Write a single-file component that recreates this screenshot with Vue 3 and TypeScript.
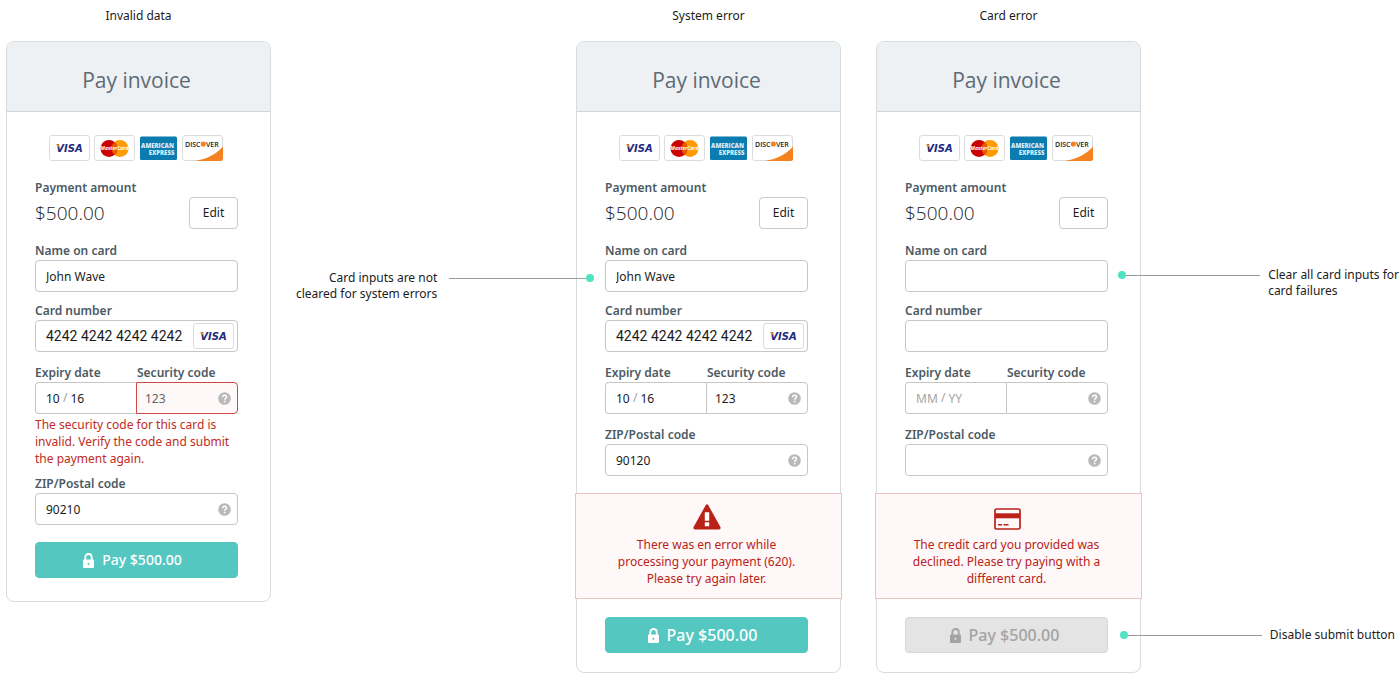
<script setup lang="ts">
interface Panel {
  id: string
  title: string
  name: string
  number: string
  month: string
  year: string
  code: string
  zip: string
  codeError?: string
  alert?: { icon: 'warning' | 'card'; text: string }
  disabled?: boolean
}

const panels: Panel[] = [
  {
    id: 'invalid',
    title: 'Invalid data',
    name: 'John Wave',
    number: '4242 4242 4242 4242',
    month: '10',
    year: '16',
    code: '123',
    zip: '90210',
    codeError: 'The security code for this card is invalid. Verify the code and submit the payment again.',
  },
  {
    id: 'system',
    title: 'System error',
    name: 'John Wave',
    number: '4242 4242 4242 4242',
    month: '10',
    year: '16',
    code: '123',
    zip: '90120',
    alert: {
      icon: 'warning',
      text: 'There was en error while processing your payment (620). Please try again later.',
    },
  },
  {
    id: 'declined',
    title: 'Card error',
    name: '',
    number: '',
    month: '',
    year: '',
    code: '',
    zip: '',
    alert: {
      icon: 'card',
      text: 'The credit card you provided was declined. Please try paying with a different card.',
    },
    disabled: true,
  },
]
</script>

<template>
  <main class="board">
    <section v-for="p in panels" :key="p.id" class="panel" :class="p.id">
      <h2 class="panel-title">{{ p.title }}</h2>
      <form class="card" @submit.prevent>
        <header class="card-head">
          <h1>Pay invoice</h1>
        </header>
        <div class="card-body">
          <div class="brands">
            <svg class="brand" viewBox="0 0 41 26" role="img" aria-label="Visa">
              <rect x="0.5" y="0.5" width="40" height="25" rx="2.5" fill="#fff" stroke="#dcdcdc" />
              <text x="20.5" y="17" class="visa-text" text-anchor="middle">VISA</text>
              <path d="M6 9.500h3.200c.7 0 1 .3 1.100.9l.6 3c-.9-1.800-2.600-3.200-4.900-3.900z" fill="#f7a02c" />
            </svg>
            <svg class="brand" viewBox="0 0 41 26" role="img" aria-label="MasterCard">
              <rect x="0.5" y="0.5" width="40" height="25" rx="2.5" fill="#fff" stroke="#dcdcdc" />
              <circle cx="26" cy="13.500" r="8.500" fill="#ff9a00" />
              <circle cx="15" cy="13.500" r="8.500" fill="#cc0000" />
              <path d="M20.500 7a8.500 8.500 0 0 1 0 13a8.500 8.500 0 0 1 0-13z" fill="#e85a00" />
              <text x="20.500" y="15.300" class="mc-text" text-anchor="middle">MasterCard</text>
            </svg>
            <svg class="brand amex" viewBox="0 0 39 26" role="img" aria-label="American Express">
              <rect x="1" y="1.500" width="37" height="23.500" rx="1.500" fill="#0b7bb0" />
              <text x="18.500" y="12.500" class="amex-text" text-anchor="middle">AMERICAN</text>
              <text x="22.500" y="19.500" class="amex-text" text-anchor="middle">EXPRESS</text>
            </svg>
            <svg class="brand" viewBox="0 0 41 26" role="img" aria-label="Discover">
              <rect x="0.5" y="0.5" width="40" height="25" rx="2.5" fill="#fff" stroke="#dcdcdc" />
              <path d="M41 11.500v12a2.500 2.500 0 0 1-2.500 2.500H13c12-2 22-7.500 28-14.500z" fill="#f58220" />
              <text x="3" y="11.500" class="disc-text">DISC</text>
              <circle cx="21.300" cy="9" r="2.600" fill="#f58220" />
              <text x="24" y="11.500" class="disc-text">VER</text>
            </svg>
          </div>

          <div class="label">Payment amount</div>
          <div class="amount-row">
            <span class="amount">$500.00</span>
            <button type="button" class="edit">Edit</button>
          </div>

          <label class="label name-label" :for="p.id + '-name'">Name on card</label>
          <div class="field">
            <input :id="p.id + '-name'" type="text" :value="p.name" />
          </div>

          <label class="label number-label" :for="p.id + '-number'">Card number</label>
          <div class="field">
            <input :id="p.id + '-number'" class="number" type="text" :value="p.number" />
            <svg v-if="p.number" class="badge" viewBox="0 0 41 26" role="img" aria-label="Visa">
              <rect x="0.5" y="0.5" width="40" height="25" rx="2.5" fill="#fff" stroke="#dcdcdc" />
              <text x="20.5" y="17" class="visa-text" text-anchor="middle">VISA</text>
              <path d="M6 9.500h3.200c.7 0 1 .3 1.100.9l.6 3c-.9-1.800-2.600-3.200-4.900-3.900z" fill="#f7a02c" />
            </svg>
          </div>

          <div class="split">
            <div class="split-cell">
              <label class="label" :for="p.id + '-month'">Expiry date</label>
              <div class="field field-left">
                <input :id="p.id + '-month'" class="short" :class="{ blank: !p.month }" type="text" placeholder="MM" :value="p.month" />
                <span class="slash">/</span>
                <input class="short" :class="{ blank: !p.year }" type="text" placeholder="YY" aria-label="Expiry year" :value="p.year" />
              </div>
            </div>
            <div class="split-cell">
              <label class="label code-label" :for="p.id + '-code'">Security code</label>
              <div class="field field-right" :class="{ invalid: p.codeError }">
                <input :id="p.id + '-code'" type="text" :value="p.code" />
                <button type="button" class="help" aria-label="Help with security code">
                  <svg viewBox="0 0 13 13" aria-hidden="true">
                    <circle cx="6.500" cy="6.500" r="6.300" fill="#b9b9b9" />
                    <path d="M4.600 5.200C4.600 3.900 5.400 3.300 6.500 3.300S8.500 4 8.500 5c0 1.300-1.900 1.300-1.900 2.700" fill="none" stroke="#fff" stroke-width="1.500" />
                    <rect x="5.800" y="8.700" width="1.600" height="1.600" fill="#fff" />
                  </svg>
                </button>
              </div>
            </div>
          </div>
          <p v-if="p.codeError" class="code-error">{{ p.codeError }}</p>

          <label class="label zip-label" :for="p.id + '-zip'">ZIP/Postal code</label>
          <div class="field">
            <input :id="p.id + '-zip'" type="text" :value="p.zip" />
            <button type="button" class="help" aria-label="Help with postal code">
              <svg viewBox="0 0 13 13" aria-hidden="true">
                <circle cx="6.500" cy="6.500" r="6.300" fill="#b9b9b9" />
                <path d="M4.600 5.200C4.600 3.900 5.400 3.300 6.500 3.300S8.500 4 8.500 5c0 1.300-1.900 1.300-1.900 2.700" fill="none" stroke="#fff" stroke-width="1.500" />
                <rect x="5.800" y="8.700" width="1.600" height="1.600" fill="#fff" />
              </svg>
            </button>
          </div>

          <div v-if="p.alert" class="alert" role="alert">
            <svg v-if="p.alert.icon === 'warning'" class="alert-icon" viewBox="0 0 28 26" aria-hidden="true">
              <path d="M12.700 1.200q1.300-1.700 2.600 0L27.400 23q.9 2.300-1.500 2.500H2.100Q-.3 25.300.6 23z" fill="#b92217" />
              <path d="M11.800 8.200h4.400v8.600h-4.400zM11.800 18.300h4.400v4h-4.400z" fill="#fff" />
            </svg>
            <svg v-else class="alert-icon" viewBox="0 0 28 26" aria-hidden="true">
              <rect x="2" y="5" width="25" height="20" rx="1.500" fill="#fff8f8" stroke="#b92217" stroke-width="1.700" />
              <path d="M2 9.300h25v5H2z" fill="#b92217" />
              <path d="M5 20h4v1.500H5zM10.500 20h5v1.500h-5z" fill="#b92217" />
            </svg>
            <p>{{ p.alert.text }}</p>
          </div>

          <button type="submit" class="pay" :disabled="p.disabled">
            <svg class="lock" viewBox="0 0 11 15" aria-hidden="true">
              <path d="M2.300 7V4.200a3.200 3.200 0 0 1 6.400 0V7" fill="none" stroke="currentColor" stroke-width="1.800" />
              <path fill-rule="evenodd" d="M1 6.500h9q1 0 1 1V14q0 1-1 1H1q-1 0-1-1V7.500q0-1 1-1zM5.500 9.800a1 1 0 1 0 .01 0z" fill="currentColor" />
            </svg>
            <span>Pay $500.00</span>
          </button>
        </div>
      </form>
    </section>

    <aside class="notes notes-middle">
      <div class="note note-system">
        <p>Card inputs are not<br />cleared for system errors</p>
        <span class="line"></span>
        <span class="dot"></span>
      </div>
    </aside>

    <aside class="notes notes-right">
      <div class="note note-clear">
        <span class="dot"></span>
        <span class="line"></span>
        <p>Clear all card inputs for<br />card failures</p>
      </div>
      <div class="note note-disable">
        <span class="dot"></span>
        <span class="line"></span>
        <p>Disable submit button</p>
      </div>
    </aside>
  </main>
</template>

<style>
body {
  background: #fff;
}
</style>

<style scoped>
.board {
  display: grid;
  grid-template-columns:
    minmax(265px, 265fr) minmax(290px, 305fr) minmax(265px, 265fr) 35fr
    minmax(265px, 265fr) minmax(258px, 259fr);
  align-items: start;
  padding: 7px 0 12px 6px;
  font-family: "Noto Sans", "Open Sans", sans-serif;
  font-size: 12px;
  line-height: 18px;
  color: #1c1c1c;
}

.panel,
.notes {
  grid-row: 1;
}

.panel.invalid { grid-column: 1; }
.panel.system { grid-column: 3; }
.panel.declined { grid-column: 5; }
.notes-middle { grid-column: 2; }
.notes-right { grid-column: 6; }

h1,
h2,
p {
  margin: 0;
  font-weight: 400;
}

.panel-title {
  margin-bottom: 16px;
  font-size: 12px;
  line-height: 18px;
  text-align: center;
}

.card {
  border: 1px solid #d9dcde;
  border-radius: 8px;
}

.card-head {
  padding: 23px 32px 16px 28px;
  border-bottom: 1px solid #cfd5d9;
  border-radius: 7px 7px 0 0;
  background: #edf1f4;
}

.card-head h1 {
  font-family: "Open Sans", "Noto Sans", sans-serif;
  font-size: 21px;
  line-height: 30px;
  text-align: center;
  color: #5d6b75;
}

.card-body {
  padding: 23px 32px 19px 28px;
}

.invalid .card-body {
  padding-bottom: 23px;
}

.brands {
  display: flex;
  justify-content: center;
  gap: 4px;
  margin: 0 2px 19px 0;
}

.brand {
  width: 41px;
  height: 26px;
}

.brand.amex {
  width: 39px;
}

.visa-text {
  font: italic 700 10px "DejaVu Sans", sans-serif;
  fill: #1f2a7c;
}

.mc-text {
  font: italic 700 5px "Open Sans", sans-serif;
  fill: #fff;
}

.amex-text {
  font: 800 6px "Open Sans", sans-serif;
  fill: #d8edf7;
}

.disc-text {
  font: 600 7px "Open Sans", sans-serif;
  fill: #222;
}

.label {
  display: block;
  margin-bottom: 1px;
  font-weight: 600;
  line-height: 16px;
  color: #4b5a64;
}

.amount-row {
  display: flex;
  align-items: center;
  justify-content: space-between;
}

.amount {
  font-family: "Open Sans", "Noto Sans", sans-serif;
  font-weight: 300;
  font-size: 19px;
  line-height: 28px;
}

.edit {
  width: 49px;
  height: 32px;
  padding: 0;
  border: 1px solid #c9c9c9;
  border-radius: 4px;
  background: #fff;
  font: inherit;
  color: #1c1c1c;
}

.name-label { margin-top: 14px; }
.number-label { margin-top: 11px; }
.zip-label { margin-top: 13px; }
.invalid .zip-label { margin-top: 9px; }
.code-label { padding-left: 1px; }

.field {
  display: flex;
  align-items: center;
  box-sizing: border-box;
  height: 32px;
  padding: 0 6px 0 10px;
  border: 1px solid #c6c6c6;
  border-radius: 4px;
  background: #fff;
}

.field input {
  flex: 1;
  width: 100%;
  min-width: 0;
  height: 28px;
  padding: 0;
  border: 0;
  outline: 0;
  background: none;
  font: inherit;
  color: #1c1c1c;
}

.field input.number {
  font-family: Roboto, "Noto Sans", sans-serif;
  font-size: 14px;
}

.field .short {
  flex: none;
  width: 14px;
}

.field .short.blank {
  width: 22px;
}

.field input::placeholder {
  color: #a3a3a3;
  opacity: 1;
}

.slash {
  padding: 0 3px;
  color: #a3a3a3;
}

.badge {
  flex: none;
  width: 41px;
  height: 26px;
  margin-right: -3px;
}

.help {
  flex: none;
  width: 13px;
  height: 13px;
  padding: 0;
  border: 0;
  background: none;
}

.help svg {
  display: block;
  width: 13px;
  height: 13px;
}

.split {
  display: grid;
  grid-template-columns: minmax(0, 101fr) minmax(0, 102fr);
  margin-top: 13px;
}

.field-left {
  border-right: 0;
  border-radius: 4px 0 0 4px;
}

.field-right {
  padding-left: 8px;
  border-radius: 0 4px 4px 0;
}

.field-right.invalid {
  border-color: #cf4a43;
  background: #fff8f8;
}

.field-right.invalid input {
  color: #5f666b;
}

.code-error {
  padding-top: 2px;
  line-height: 17px;
  color: #c02b22;
}

.alert {
  margin: 17px -34px 0 -30px;
  padding: 10px 36px 11px 32px;
  border: 1px solid #efc3c1;
  background: #fff8f8;
  line-height: 17px;
  text-align: center;
  color: #b92217;
}

.alert-icon {
  display: block;
  width: 28px;
  height: 26px;
  margin: 0 auto 6px;
}

.pay {
  display: flex;
  align-items: center;
  justify-content: center;
  gap: 8px;
  width: 100%;
  height: 36px;
  margin-top: 17px;
  padding: 0 8px 0 0;
  border: 1px solid #54c7c1;
  border-radius: 4px;
  background: #54c7c1;
  font: inherit;
  font-weight: 500;
  font-size: 16px;
  color: #fff;
}

.invalid .pay {
  font-size: 14px;
}

.alert + .pay {
  margin-top: 18px;
}

.pay:disabled {
  padding-right: 4px;
  border-color: #d6d6d6;
  background: #e4e4e4;
  color: #a3a3a3;
}

.lock {
  width: 11px;
  height: 15px;
}

.notes {
  position: relative;
  z-index: 1;
  line-height: 16px;
}

.note {
  display: flex;
}

.note p {
  flex: none;
}

.line {
  flex: 1;
  height: 1px;
  margin-top: 8px;
  background: #9b9b9b;
}

.dot {
  flex: none;
  width: 8px;
  height: 8px;
  margin-top: 4px;
  border-radius: 50%;
  background: #50e3c2;
}

.note-system {
  margin: 263px -18px 0 25px;
}

.note-system p {
  margin-right: 12px;
  text-align: right;
}

.note-clear {
  margin: 260px 1px 0 -23px;
}

.note-disable {
  margin: 328px 5px 0 -21px;
}

.note-clear p,
.note-disable p {
  margin-left: 8px;
}
</style>
